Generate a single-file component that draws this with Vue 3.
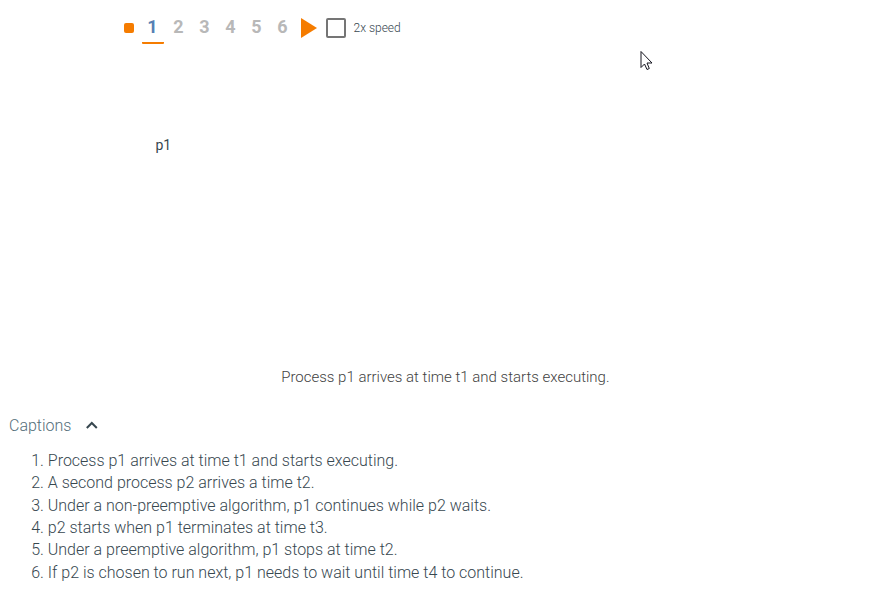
<script setup>
const steps = [1, 2, 3, 4, 5, 6]
const captions = [
  'Process p1 arrives at time t1 and starts executing.',
  'A second process p2 arrives a time t2.',
  'Under a non-preemptive algorithm, p1 continues while p2 waits.',
  'p2 starts when p1 terminates at time t3.',
  'Under a preemptive algorithm, p1 stops at time t2.',
  'If p2 is chosen to run next, p1 needs to wait until time t4 to continue.',
]
</script>

<template>
  <main class="player">
    <header class="controls">
      <span class="stop"></span>
      <nav class="steps">
        <span v-for="n in steps" :key="n" class="step" :class="{ active: n === 1 }">{{ n }}</span>
      </nav>
      <svg class="play" width="16" height="20" viewBox="0 0 16 20"><path d="M0 0L16 10L0 20Z" fill="#f57c00" /></svg>
      <span class="checkbox"></span>
      <span class="speed">2x speed</span>
    </header>
    <section class="stage"><span class="process">p1</span></section>
    <p class="current">{{ captions[0] }}</p>
    <section class="captions">
      <div class="heading">
        <span>Captions</span>
        <svg width="12" height="8" viewBox="0 0 12 8"><path d="M0.8 7L5.8 2L10.8 7" fill="none" stroke="#37474f" stroke-width="2" /></svg>
      </div>
      <ol class="list">
        <li v-for="(text, i) in captions" :key="i">{{ i + 1 }}. {{ text }}</li>
      </ol>
    </section>
    <svg class="cursor" width="13" height="21" viewBox="0 0 13 21"><path d="M1 1.5V17.5L4.5 14L7 19.5L9.3 18.5L7 13H12Z" fill="#fff" stroke="#15151f" /></svg>
  </main>
</template>

<style>
body { background: #fff; }
</style>
<style scoped>
.player { position: relative; box-sizing: border-box; width: 876px; height: 603px; font-family: Roboto, sans-serif; font-weight: 300; color: #37474f; overflow: hidden; }
.controls { display: flex; align-items: center; height: 44px; padding: 12px 0 0 124px; box-sizing: border-box; }
.stop { width: 10px; height: 10px; border-radius: 2px; background: #f57c00; margin-right: 8px; }
.steps { display: flex; gap: 4px; height: 32px; }
.step { box-sizing: border-box; width: 22px; height: 32px; padding-right: 1px; line-height: 30px; text-align: center; font-size: 18px; font-weight: 700; color: #b8b8b8; }
.active { color: #5780b4; border-bottom: 2px solid #f57c00; border-radius: 1px; }
.play { margin-left: 7px; }
.checkbox { box-sizing: border-box; width: 20px; height: 20px; border: 2px solid #757575; border-radius: 2px; margin-left: 9px; }
.speed { margin-left: 7.5px; font-size: 12px; }
.stage { height: 323px; padding: 91px 0 0 155.5px; box-sizing: border-box; }
.process { font-size: 14px; font-weight: 400; line-height: 18px; color: #37474f; }
.current { margin: 0 0 0 281.2px; font-size: 15px; line-height: 20px; white-space: nowrap; color: #424242; }
.captions { padding: 27px 0 0 9px; }
.heading { display: flex; align-items: center; gap: 14.7px; height: 22px; font-size: 16px; color: #546e7a; }
.list { list-style: none; margin: 13.8px 0 0; padding: 0 0 0 22.2px; font-size: 16px; line-height: 22.4px; white-space: nowrap; }
.cursor { position: absolute; left: 640px; top: 50px; }
</style>
